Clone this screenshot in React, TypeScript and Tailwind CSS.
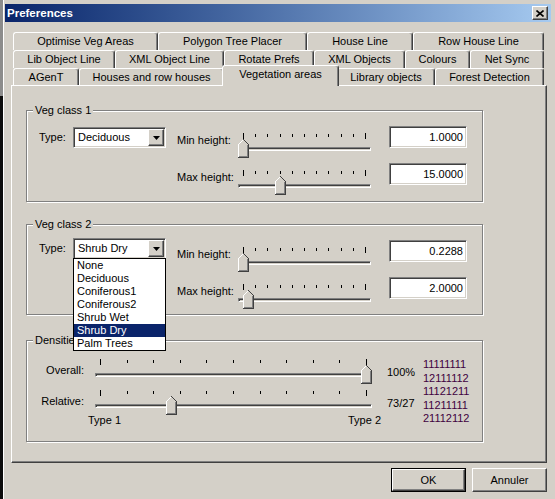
import React from "react";

const sunken =
  "border border-t-[#808080] border-l-[#808080] border-b-white border-r-white shadow-[inset_1px_1px_0_#404040,inset_-1px_-1px_0_#d4d0c8]";
const raised =
  "border border-t-white border-l-white border-r-[#404040] border-b-[#404040] shadow-[inset_-1px_-1px_0_#808080]";

const tabRows = [
  [
    { label: "Optimise Veg Areas", w: "w-[145px]" },
    { label: "Polygon Tree Placer", w: "w-[149px]" },
    { label: "House Line", w: "w-[106px]" },
    { label: "Row House Line", w: "w-[131px]" },
  ],
  [
    { label: "Lib Object Line", w: "w-[102px]" },
    { label: "XML Object Line", w: "w-[109px]" },
    { label: "Rotate Prefs", w: "w-[90px]" },
    { label: "XML Objects", w: "w-[91px]" },
    { label: "Colours", w: "w-[65px]" },
    { label: "Net Sync", w: "w-[74px]" },
  ],
  [
    { label: "AGenT", w: "w-[66px]" },
    { label: "Houses and row houses", w: "w-[145px]" },
    { label: "Vegetation areas", w: "w-[117px]", selected: true },
    { label: "Library objects", w: "w-[98px]" },
    { label: "Forest Detection", w: "w-[109px]" },
  ],
];

const vegTypes = ["None", "Deciduous", "Coniferous1", "Coniferous2", "Shrub Wet", "Shrub Dry", "Palm Trees"];

function Thumb({ left }: { left: number }) {
  return (
    <svg width="11" height="19" className="absolute top-[6px]" style={{ left }} shapeRendering="crispEdges">
      <polygon points="0,5 5,0 6,0 11,5 11,19 0,19" fill="#d4d0c8" />
      <path d="M0.5 18 V5.5 L5.5 0.5" stroke="#fff" fill="none" />
      <path d="M5.5 0.5 L10.5 5.5 V18.5 H0" stroke="#404040" fill="none" />
      <path d="M9.5 6 V17.5 H1" stroke="#808080" fill="none" />
    </svg>
  );
}

function Slider({ width, ticks, pos, className = "" }: { width: number; ticks: number; pos: number; className?: string }) {
  const span = width - 11;
  return (
    <div className={`relative h-[26px] shrink-0 ${className}`}>
      {Array.from({ length: ticks }, (_, i) => {
        const edge = i === 0 || i === ticks - 1;
        return (
          <span
            key={i}
            className={`absolute w-px bg-black ${edge ? "top-0 h-[6px]" : "top-[1px] h-[3px]"}`}
            style={{ left: 5 + Math.round((span * i) / (ticks - 1)) }}
          />
        );
      })}
      <div className="absolute left-0 right-0 top-[14px] h-[4px] border border-t-[#808080] border-l-[#808080] border-b-white border-r-white shadow-[inset_1px_1px_0_#404040]" />
      <Thumb left={Math.round(span * pos)} />
    </div>
  );
}

function Combo({ value, open = false, className = "" }: { value: string; open?: boolean; className?: string }) {
  return (
    <div className={`relative w-[93px] h-[21px] bg-white p-px flex items-stretch ${sunken} ${className}`}>
      <span className="flex-1 pl-[3px] flex items-center">{value}</span>
      <span className={`w-[16px] bg-[#d4d0c8] flex items-center justify-center ${raised}`}>
        <svg width="7" height="4" viewBox="0 0 7 4">
          <polygon points="0,0 7,0 3.5,4" fill="#000" />
        </svg>
      </span>
      {open && (
        <ul className="absolute left-[-1px] top-full z-20 w-[93px] bg-white border border-black">
          {vegTypes.map((t) => (
            <li
              key={t}
              className={`h-[13px] pl-[3px] leading-[13px] ${t === value ? "bg-[#0a246a] text-white" : ""}`}
            >
              {t}
            </li>
          ))}
        </ul>
      )}
    </div>
  );
}

function TextBox({ value }: { value: string }) {
  return (
    <div className={`ml-[18px] w-[78px] h-[22px] bg-white pr-[3px] flex items-center justify-end ${sunken}`}>
      {value}
    </div>
  );
}

function HeightRow({ label, value, pos }: { label: string; value: string; pos: number }) {
  return (
    <div className="flex items-start h-[37px]">
      <span className="w-[61px] mt-[8px] whitespace-nowrap">{label}</span>
      <Slider className="w-[133px] mt-[7px]" width={133} ticks={11} pos={pos} />
      <TextBox value={value} />
    </div>
  );
}

function Group({ legend, className = "", children }: { legend: string; className?: string; children: React.ReactNode }) {
  return (
    <fieldset
      className={`w-[457px] border border-[#808080] shadow-[1px_1px_0_#fff,inset_1px_1px_0_#fff] ${className}`}
    >
      <legend className="ml-[6px] px-[2px] bg-[#d4d0c8]">{legend}</legend>
      {children}
    </fieldset>
  );
}

function VegClass({ legend, type, open, min, max, minPos, maxPos, comboOffset }: any) {
  return (
    <div className="flex pl-[12px] pt-[9px]">
      <div className={`flex items-center self-start h-[21px] ${comboOffset}`}>
        <span className="w-[34px]">Type:</span>
        <Combo value={type} open={open} />
      </div>
      <div className="flex flex-col ml-[11px]">
        <HeightRow label="Min height:" value={min} pos={minPos} />
        <HeightRow label="Max height:" value={max} pos={maxPos} />
      </div>
    </div>
  );
}

export default function App() {
  return (
    <div className="w-[555px] h-[499px] flex bg-[#d4d0c8] overflow-hidden font-['Liberation_Sans',Arial,sans-serif] text-[11px] leading-[13px] text-black">
      <div className="w-[3px] flex flex-col">
        <div className="h-[96px] bg-[#8c8c8c]" />
        <div className="flex-1 bg-[#0c0c0c]" />
      </div>
      <div className="flex-1 flex flex-col border-l border-l-white pl-px pt-[4px]">
        {/* title bar */}
        <div className="w-[546px] h-[18px] flex items-center pl-[2px] pr-[3px] bg-gradient-to-r from-[#0a246a] to-[#a6caf0]">
          <span className="font-bold text-white text-[11.5px]">Preferences</span>
          <span className={`ml-auto w-[16px] h-[14px] bg-[#d4d0c8] flex items-center justify-center ${raised}`}>
            <svg width="8" height="7" viewBox="0 0 8 7">
              <path d="M0.5 0.5 L7.5 6.5 M7.5 0.5 L0.5 6.5" stroke="#000" strokeWidth="1.6" />
            </svg>
          </span>
        </div>

        {/* tabs */}
        <div className="ml-[8px] mt-[10px] flex flex-col">
          {tabRows.map((row, ri) => (
            <div key={ri} className={`flex items-end ${ri === 2 ? "h-[17px]" : "h-[18px]"}`}>
              {row.map((t: any) =>
                t.selected ? (
                  <div
                    key={t.label}
                    className={`${t.w} h-[21px] -mx-[2px] -mb-px relative z-10 bg-[#d4d0c8] pt-[2px] flex justify-center whitespace-nowrap rounded-t-[3px] border-t border-l border-white border-r border-r-[#404040] shadow-[inset_-1px_0_0_#808080]`}
                  >
                    {t.label}
                  </div>
                ) : (
                  <div
                    key={t.label}
                    className={`${t.w} h-full flex items-center justify-center whitespace-nowrap rounded-t-[3px] border-t border-l border-white border-r border-r-[#404040] shadow-[inset_-1px_0_0_#808080]`}
                  >
                    {t.label}
                  </div>
                )
              )}
            </div>
          ))}
        </div>

        {/* panel */}
        <div className="ml-[6px] w-[536px] h-[378px] pt-[18px] pl-[14px] border border-t-white border-l-white border-r-[#404040] border-b-[#404040] shadow-[inset_-1px_-1px_0_#808080]">
          <Group legend="Veg class 1" className="h-[98px]">
            <VegClass type="Deciduous" min="1.0000" max="15.0000" minPos={0} maxPos={0.3} comboOffset="mt-[1px]" />
          </Group>
          <Group legend="Veg class 2" className="h-[97px] mt-[16px] relative z-10">
            <VegClass type="Shrub Dry" open min="0.2288" max="2.0000" minPos={0} maxPos={0.04} comboOffset="-mt-[2px]" />
          </Group>
          <Group legend="Densities" className="h-[108px] mt-[19px]">
            <div className="flex">
              <div className="w-[396px] pt-[12px] flex flex-col">
                <div className="flex items-start h-[31px]">
                  <span className="w-[57px] text-right mt-[5px]">Overall:</span>
                  <Slider className="ml-[11px] w-[277px]" width={277} ticks={11} pos={1} />
                  <span className="ml-[15px] mt-[7px]">100%</span>
                </div>
                <div className="flex items-start h-[24px]">
                  <span className="w-[57px] text-right mt-[5px]">Relative:</span>
                  <Slider className="ml-[11px] w-[277px]" width={277} ticks={11} pos={0.267} />
                  <span className="ml-[15px] mt-[7px]">73/27</span>
                </div>
                <div className="flex ml-[61px]">
                  <span className="w-[260px]">Type 1</span>
                  <span>Type 2</span>
                </div>
              </div>
              <div className="pt-[11px] leading-[13.5px] text-[#400040]">
                <div>11111111</div>
                <div>12111112</div>
                <div>11121211</div>
                <div>11211111</div>
                <div>21112112</div>
              </div>
            </div>
          </Group>
        </div>

        {/* buttons */}
        <div className="ml-[6px] w-[536px] mt-[5px] flex justify-end gap-[6px]">
          <div className="w-[75px] h-[24px] border border-black">
            <div className={`w-full h-full flex items-center justify-center ${raised}`}>OK</div>
          </div>
          <div className={`w-[75px] h-[24px] flex items-center justify-center ${raised}`}>Annuler</div>
        </div>
      </div>
    </div>
  );
}
